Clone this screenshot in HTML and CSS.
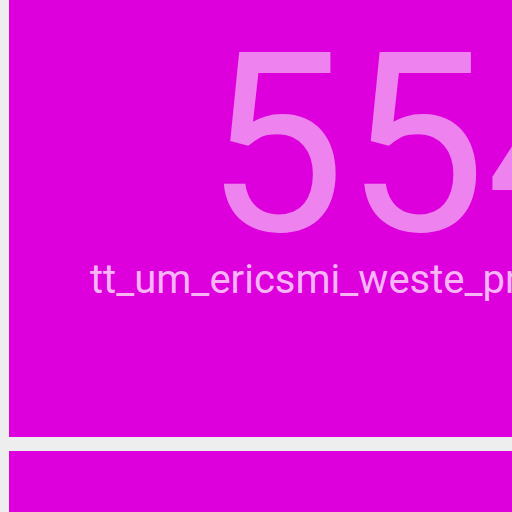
FILE: index.html
```html
<!DOCTYPE html>
<html>
<head>
<meta charset="utf-8">
<link rel="stylesheet" href="styles.css">
</head>
<body>
<div class="list">
  <div class="card">
    <div class="num">5540</div>
    <div class="label">tt_um_ericsmi_weste_project</div>
  </div>
  <div class="card"></div>
</div>
</body>
</html>
```
FILE: styles.css
```css
html, body {
  margin: 0;
  padding: 0;
  background: #eeeeee;
  overflow: hidden;
  width: 512px;
  height: 512px;
}
.list {
  display: flex;
  flex-direction: column;
  gap: 14px;
  padding-left: 9px;
}
.card {
  flex: none;
  width: 800px;
  height: 437px;
  background: #dd00dd;
  font-family: Roboto, sans-serif;
  display: flex;
  flex-direction: column;
}
.num {
  color: #ee82ee;
  font-size: 250px;
  line-height: 1;
  padding-left: 196px;
  margin-top: 21px;
}
.label {
  color: #f7b5f7;
  font-size: 40px;
  line-height: 1;
  padding-left: 81px;
  margin-top: -11px;
  white-space: nowrap;
}
```
